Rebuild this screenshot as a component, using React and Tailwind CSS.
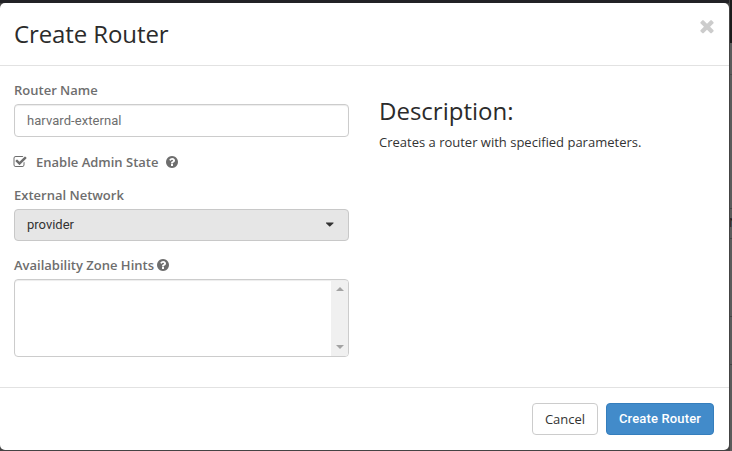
const CHECK =
  'M1472 930v318q0 119-84.5 203.5t-203.5 84.5h-832q-119 0-203.5-84.5t-84.5-203.5v-832q0-119 84.5-203.5t203.5-84.5h832q63 0 117 25 15 7 18 23 3 17-9 29l-49 49q-10 10-23 10-3 0-9-2-23-6-45-6h-832q-66 0-113 47t-47 113v832q0 66 47 113t113 47h832q66 0 113-47t47-113v-254q0-13 9-22l64-64q10-10 23-10 6 0 12 3 20 8 20 29zm231-489l-814 814q-24 24-57 24t-57-24l-430-430q-24-24-24-57t24-57l110-110q24-24 57-24t57 24l263 263 647-647q24-24 57-24t57 24l110 110q24 24 24 57t-24 57z';
const TIMES =
  'M1490 1322q0 40-28 68l-136 136q-28 28-68 28t-68-28l-294-294-294 294q-28 28-68 28t-68-28l-136-136q-28-28-28-68t28-68l294-294-294-294q-28-28-28-68t28-68l136-136q28-28 68-28t68 28l294 294 294-294q28-28 68-28t68 28l136 136q28 28 28 68t-28 68l-294 294 294 294q28 28 28 68z';
const QUESTION =
  'M1024 1376v-192q0-14-9-23t-23-9h-192q-14 0-23 9t-9 23v192q0 14 9 23t23 9h192q14 0 23-9t9-23zm256-672q0-88-55.5-163t-138.5-116-170-41q-243 0-371 213-15 24 8 42l132 100q7 6 19 6 16 0 25-12 53-68 86-92 34-24 86-24 48 0 85.5 26t37.5 59q0 38-20 61t-68 45q-63 28-115.5 86.5t-52.5 125.5v36q0 14 9 23t23 9h192q14 0 23-9t9-23q0-19 21.5-49.5t54.5-49.5q32-18 49-28.5t46-35 44.5-48 28-60.5 12.5-81zm384 192q0 209-103 385.5t-279.5 279.5-385.5 103-385.5-103-279.5-279.5-103-385.5 103-385.5 279.5-279.5 385.5-103 385.5 103 279.5 279.5 103 385.5z';

function Icon({ d, className }) {
  return (
    <svg viewBox="0 0 1792 1792" fill="currentColor" className={className} aria-hidden="true">
      <path d={d} />
    </svg>
  );
}

function Label({ children, className = '' }) {
  return (
    <div className={`flex h-[18px] items-center text-[13px] leading-[18px] font-semibold whitespace-nowrap text-[#6e6e6e] ${className}`}>
      {children}
    </div>
  );
}

function Backdrop() {
  return (
    <div className="flex w-[3px] shrink-0 flex-col border-l border-[#444444] bg-[#5b5b5b]">
      <div className="h-[43px] bg-[#1b1b1b]" />
      <div className="h-[31px]" />
      <div className="h-px bg-[#4b4b4b]" />
      <div className="h-[133px]" />
      <div className="h-px bg-[#444444]" />
      <div className="h-[29px] overflow-hidden pt-[7px] text-[12px] leading-[14px] text-[#1c1c1c]">
        <span className="-ml-[1px]">N</span>
      </div>
      <div className="h-px bg-[#444444]" />
      <div className="h-[77px]" />
      <div className="h-px bg-[#444444]" />
      <div className="h-[47px]" />
      <div className="h-px bg-[#444444]" />
    </div>
  );
}

export default function App() {
  return (
    <div className="flex h-[451px] w-[732px] overflow-hidden bg-[#303030] font-['Open_Sans',sans-serif] text-[#333333]">
      <div className="flex w-[729px] shrink-0 flex-col bg-[#444444]">
        <div className="h-[3px] shrink-0 bg-[#222226]" />
        <div className="flex h-[447px] flex-col rounded-[5px] bg-white">
          <header className="flex h-[63px] shrink-0 items-start justify-between border-b border-[#e2e2e2] pr-3 pl-[14px]">
            <h1 className="mt-[14px] text-[24px] leading-[33px] font-medium tracking-[-0.1px] text-[#2b2b2b]">Create Router</h1>
            <button className="mt-[13px] text-[#cccccc]" aria-label="Close">
              <Icon d={TIMES} className="size-5" />
            </button>
          </header>

          <main className="flex h-[321px] shrink-0 px-[14px]">
            <form className="w-[335px] shrink-0">
              <Label className="mt-[15px]">Router Name</Label>
              <div className="mt-[5px] flex h-[33px] items-center rounded-[4px] border border-[#cccccc] px-3 font-['Roboto',sans-serif] text-[13px] tracking-[0.06px] text-[#6e6e6e] shadow-[inset_0_1px_1px_rgba(0,0,0,0.075)]">
                harvard-external
              </div>
              <Label className="mt-4">
                <Icon d={CHECK} className="-mt-px -ml-px mr-[9px] size-[14px]" />
                Enable Admin State
                <Icon d={QUESTION} className="ml-[7px] size-[14px]" />
              </Label>
              <Label className="mt-[15px]">External Network</Label>
              <div className="mt-[5px] flex h-8 items-center justify-between rounded-[4px] border border-[#c8c8c8] bg-[#e6e6e6] pr-[14px] pl-3 font-['Roboto',sans-serif] text-[13px]">
                provider
                <svg viewBox="0 0 8 5" className="mb-px h-[5px] w-2" fill="#333333" aria-hidden="true">
                  <path d="M0 .4h7.5v.8L3.75 4.8 0 1.2z" />
                </svg>
              </div>
              <Label className="mt-[15px]">
                Availability Zone Hints
                <Icon d={QUESTION} className="ml-[2px] size-[14px]" />
              </Label>
              <div className="mt-[5px] flex h-[78px] justify-end overflow-hidden rounded-[4px] border border-[#cccccc] pt-px shadow-[inset_0_1px_1px_rgba(0,0,0,0.075)]">
                <div className="flex w-[17px] flex-col items-center justify-between bg-[#f0f0f0] pt-[6px] pb-[7px]">
                  <span className="border-x-4 border-b-4 border-x-transparent border-b-[#a3a3a3]" />
                  <span className="border-x-4 border-t-4 border-x-transparent border-t-[#a3a3a3]" />
                </div>
              </div>
            </form>
            <section className="ml-[30px]">
              <h2 className="mt-[28px] text-[24px] leading-[33px] font-medium text-[#2b2b2b]">Description:</h2>
              <p className="mt-[6px] text-[13px] leading-[18px]">Creates a router with specified parameters.</p>
            </section>
          </main>

          <footer className="flex h-[63px] shrink-0 items-start justify-end gap-2 border-t border-[#e2e2e2] pt-[15px] pr-[15px]">
            <button className="h-8 w-[66px] rounded-[4px] border border-[#cccccc] text-[13px] leading-[30px]">Cancel</button>
            <button className="h-8 w-[108px] rounded-[4px] border border-[#357ebd] bg-[#428bca] font-['Roboto',sans-serif] text-[13px] leading-[28px] font-medium tracking-[0.15px] text-white">
              Create Router
            </button>
          </footer>
        </div>
      </div>
      <Backdrop />
    </div>
  );
}
